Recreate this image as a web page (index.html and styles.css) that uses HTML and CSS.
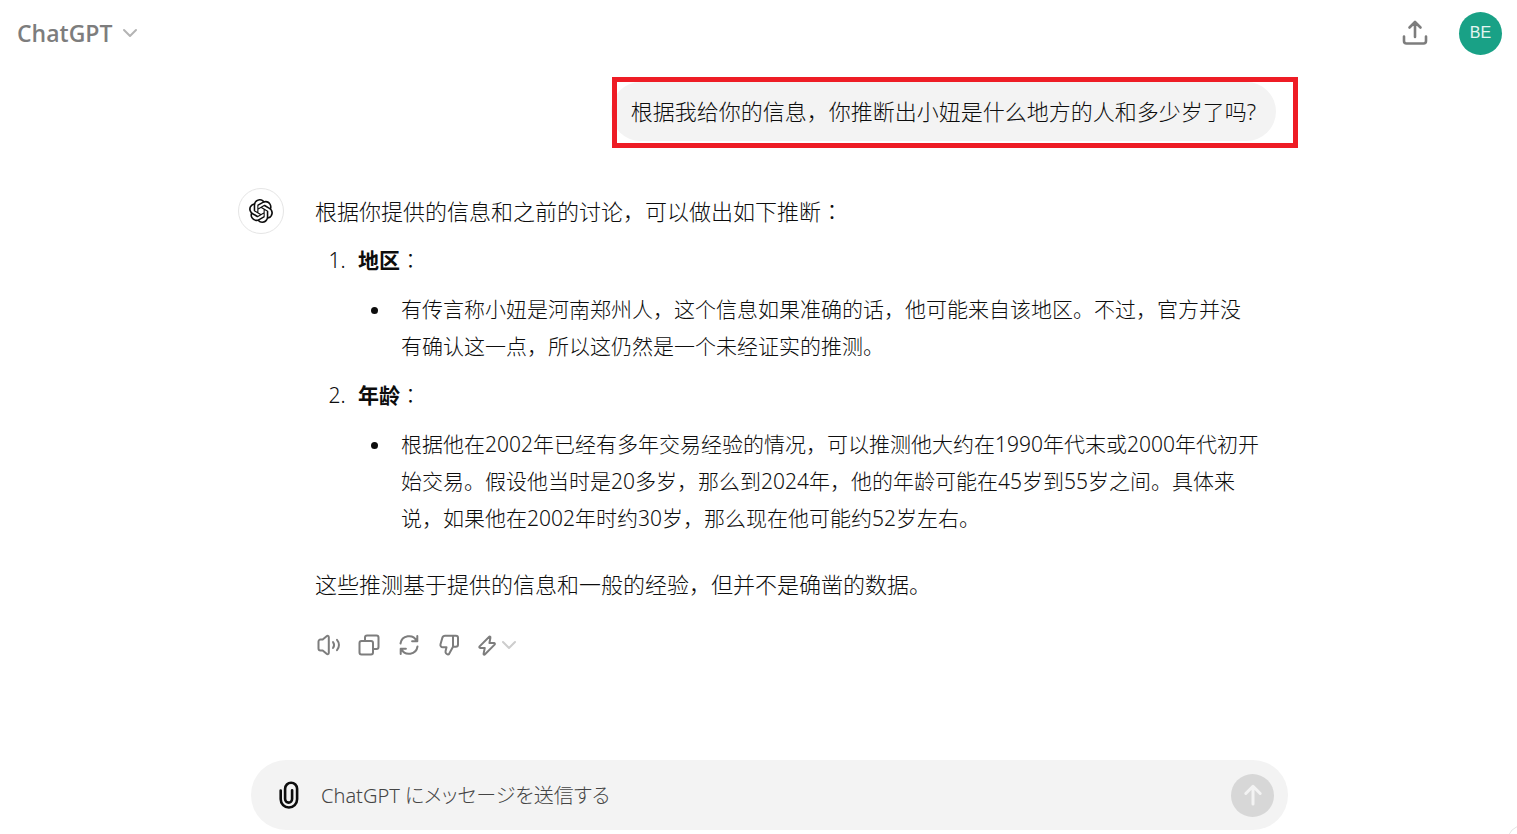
FILE: index.html
```html
<!DOCTYPE html>
<html lang="zh-CN">
<head>
  <meta charset="UTF-8" />
  <meta name="viewport" content="width=device-width, initial-scale=1.0"/>
  <title>ChatGPT</title>
  <link rel="stylesheet" href="styles.css">
</head>
<body>
  <header class="topbar">
    <button class="model-btn" type="button">
      ChatGPT
      <svg class="chevron" width="16" height="10" viewBox="0 0 16 10"><path d="M2 2l6 6 6-6"/></svg>
    </button>
    <div class="topbar-right">
      <button class="icon-btn" type="button" aria-label="Share">
        <svg width="28" height="28" viewBox="0 0 28 28" stroke-width="2.6"><path d="M14 18V3.500M8.500 8.500L14 3l5.500 5.500M3 17.500v4.500a2.500 2.500 0 0 0 2.500 2.500h17a2.500 2.500 0 0 0 2.500-2.500v-4.500"/></svg>
      </button>
      <button class="user-btn" type="button">BE</button>
    </div>
  </header>

  <main class="chat">
    <div class="user-row">
      <div class="bubble">根据我给你的信息，你推断出小妞是什么地方的人和多少岁了吗?<span class="highlight"></span></div>
    </div>

    <article class="reply">
      <div class="logo">
        <svg width="24" height="24" viewBox="0 0 24 24"><path d="M22.2819 9.8211a5.9847 5.9847 0 0 0-.5157-4.9108 6.0462 6.0462 0 0 0-6.5098-2.9A6.0651 6.0651 0 0 0 4.9807 4.1818a5.9847 5.9847 0 0 0-3.9977 2.9 6.0462 6.0462 0 0 0 .7427 7.0966 5.98 5.98 0 0 0 .511 4.9107 6.051 6.051 0 0 0 6.5146 2.9001A5.9847 5.9847 0 0 0 13.2599 24a6.0557 6.0557 0 0 0 5.7718-4.2058 5.9894 5.9894 0 0 0 3.9977-2.9001 6.0557 6.0557 0 0 0-.7475-7.0729zm-9.022 12.6081a4.4755 4.4755 0 0 1-2.8764-1.0408l.1419-.0804 4.7783-2.7582a.7948.7948 0 0 0 .3927-.6813v-6.7369l2.02 1.1686a.071.071 0 0 1 .038.052v5.5826a4.504 4.504 0 0 1-4.4945 4.4944zm-9.6607-4.1254a4.4708 4.4708 0 0 1-.5346-3.0137l.142.0852 4.783 2.7582a.7712.7712 0 0 0 .7806 0l5.8428-3.3685v2.3324a.0804.0804 0 0 1-.0332.0615L9.74 19.9502a4.4992 4.4992 0 0 1-6.1408-1.6464zM2.3408 7.8956a4.485 4.485 0 0 1 2.3655-1.9728V11.6a.7664.7664 0 0 0 .3879.6765l5.8144 3.3543-2.0201 1.1685a.0757.0757 0 0 1-.071 0l-4.8303-2.7865A4.504 4.504 0 0 1 2.3408 7.872zm16.5963 3.8558L13.1038 8.364 15.1192 7.2a.0757.0757 0 0 1 .071 0l4.8303 2.7913a4.4944 4.4944 0 0 1-.6765 8.1042v-5.6772a.79.79 0 0 0-.407-.667zm2.0107-3.0231l-.142-.0852-4.7735-2.7818a.7759.7759 0 0 0-.7854 0L9.409 9.2297V6.8974a.0662.0662 0 0 1 .0284-.0615l4.8303-2.7866a4.4992 4.4992 0 0 1 6.6802 4.66zM8.3065 12.863l-2.02-1.1638a.0804.0804 0 0 1-.038-.0567V6.0742a4.4992 4.4992 0 0 1 7.3757-3.4537l-.142.0805L8.704 5.459a.7948.7948 0 0 0-.3927.6813zm1.0976-2.3654l2.602-1.4998 2.6069 1.4998v2.9994l-2.5974 1.4997-2.6067-1.4997Z"/></svg>
      </div>
      <div class="content">
        <p>根据你提供的信息和之前的讨论，可以做出如下推断<span class="colon" lang="ja">：</span></p>
        <ol>
          <li>
            <strong>地区</strong><span class="colon" lang="ja">：</span>
            <ul>
              <li>有传言称小妞是河南郑州人，这个信息如果准确的话，他可能来自该地区。不过，官方并没有确认这一点，所以这仍然是一个未经证实的推测。</li>
            </ul>
          </li>
          <li>
            <strong>年龄</strong><span class="colon" lang="ja">：</span>
            <ul>
              <li>根据他在2002年已经有多年交易经验的情况，可以推测他大约在1990年代末或2000年代初开始交易。假设他当时是20多岁，那么到2024年，他的年龄可能在45岁到55岁之间。具体来说，如果他在2002年时约30岁，那么现在他可能约52岁左右。</li>
            </ul>
          </li>
        </ol>
        <p>这些推测基于提供的信息和一般的经验，但并不是确凿的数据。</p>

        <div class="actions">
          <button class="icon-btn" type="button" aria-label="Read aloud">
            <svg width="24" height="24" viewBox="0 0 24 24" stroke-width="2"><path d="M11.800 4.200v15.600c0 1.400-1.300 1.700-2.200 1L5.700 17.500H3.500a2 2 0 0 1-2-2v-7a2 2 0 0 1 2-2h2.200l3.900-3.300c.9-.7 2.200-.4 2.200 1zM16 9c1.300 1.800 1.300 4.200 0 6M20 6.800c2.600 3 2.600 7.400 0 10.400"/></svg>
          </button>
          <button class="icon-btn" type="button" aria-label="Copy">
            <svg width="24" height="24" viewBox="0 0 24 24" stroke-width="2"><rect x="2.500" y="8" width="13.500" height="13.500" rx="2"/><path d="M8 8V4.500a2 2 0 0 1 2-2h9.500a2 2 0 0 1 2 2V14a2 2 0 0 1-2 2H16"/></svg>
          </button>
          <button class="icon-btn" type="button" aria-label="Regenerate">
            <svg width="24" height="24" viewBox="0 0 24 24" stroke-width="2"><path d="M3.500 10.500A8.600 8.600 0 0 1 19.700 8M20.300 3v5.200h-5.200M20.500 13.500A8.600 8.600 0 0 1 4.300 16M3.700 21v-5.200h5.200"/></svg>
          </button>
          <button class="icon-btn" type="button" aria-label="Bad response">
            <svg width="24" height="24" viewBox="0 0 24 24" stroke-width="2"><path d="M16 2.800H8.200a3 3 0 0 0-2.900 2.100L3.500 11.200a2.400 2.400 0 0 0 2.300 3.100H9.500l-.9 3.600c-.4 1.900.6 3.300 2.300 3.600l1-.200 4.100-7.500zM16 2.800h3a2 2 0 0 1 2 2v6.800a2.200 2.200 0 0 1-2.200 2.200H16"/></svg>
          </button>
          <button class="icon-btn switch" type="button" aria-label="Change model">
            <svg width="20" height="24" viewBox="0 0 20 24" stroke-width="2"><path d="M12 4L2.600 13.400c-.6.700-.3 1.500.6 1.500h4.600L6.600 20.600c-.2 1 .7 1.400 1.400.700L17.600 11.600c.6-.7.300-1.500-.6-1.500h-4.600L13.400 4.700c.2-1-.7-1.400-1.400-.7z"/></svg>
            <svg class="chevron light" width="16" height="10" viewBox="0 0 16 10"><path d="M2 2l6 6 6-6"/></svg>
          </button>
        </div>
      </div>
    </article>
  </main>

  <div class="composer-wrap">
    <form class="composer">
      <button class="attach" type="button" aria-label="Attach">
        <svg width="20" height="28" viewBox="0 0 20 28"><path d="M1.700 9.500v8.800a8.200 8.200 0 0 0 16.400 0V7.700a6 6 0 0 0-12 0v10.400a3.500 3.500 0 0 0 7 0V9.300"/></svg>
      </button>
      <input class="prompt" type="text" lang="ja" placeholder="ChatGPT にメッセージを送信する" aria-label="ChatGPT にメッセージを送信する">
      <button class="send" type="submit" aria-label="Send" disabled>
        <svg width="24" height="24" viewBox="0 0 24 24"><path d="M12 21V3.500M4.800 10.500L12 3.300l7.200 7.200"/></svg>
      </button>
    </form>
  </div>
  <button class="help" type="button" aria-label="Help"></button>
</body>
</html>
```
FILE: styles.css
```css
* {
  box-sizing: border-box;
}

body {
  margin: 0;
  min-height: 100vh;
  display: flex;
  flex-direction: column;
  background: #fff;
  color: #0d0d0d;
  font-family: "Noto Sans", "Noto Sans CJK SC", sans-serif;
  font-weight: 300;
  font-size: 22px;
  line-height: 37px;
  overflow-x: hidden;
}

button {
  font-family: inherit;
  border: none;
  background: none;
  padding: 0;
  cursor: pointer;
}

svg {
  display: block;
  fill: none;
  stroke: currentColor;
  stroke-linecap: round;
  stroke-linejoin: round;
}

.topbar {
  display: flex;
  justify-content: space-between;
  align-items: center;
  height: 66px;
  padding: 0 15px 0 17px;
}

.model-btn {
  display: flex;
  align-items: center;
  gap: 10px;
  font-family: "Open Sans", sans-serif;
  font-size: 23px;
  font-weight: 600;
  color: #7d7d7d;
}

.chevron {
  stroke: #b4b4b4;
  stroke-width: 2;
}

.light {
  stroke: #cdcdcd;
}

.topbar-right {
  display: flex;
  align-items: center;
  gap: 30px;
}

.icon-btn {
  color: #7d7d7d;
}

.user-btn {
  width: 43px;
  height: 43px;
  border-radius: 50%;
  background: #19a186;
  color: #e4f5f1;
  font-family: "Liberation Sans", sans-serif;
  font-size: 16px;
}

.chat {
  flex: 1;
  width: 100%;
  max-width: 1041px;
  margin: 0 auto;
  padding: 16px 3px 0 0;
}

.user-row {
  display: flex;
  justify-content: flex-end;
}

.bubble {
  position: relative;
  padding: 11px 20px;
  border-radius: 30px;
  background: #f3f3f3;
}

/* red frame laid over the question */
.highlight {
  position: absolute;
  top: -5px;
  bottom: -7px;
  left: 1px;
  right: -22px;
  border: 5px solid #ee1c25;
}

.reply {
  display: flex;
  align-items: flex-start;
  gap: 31px;
  margin-top: 47px;
}

.logo {
  flex: none;
  display: flex;
  align-items: center;
  justify-content: center;
  width: 46px;
  height: 46px;
  border: 1px solid #e5e5e5;
  border-radius: 50%;
}

.logo svg {
  fill: #0d0d0d;
  stroke: none;
}

.content {
  flex: 1;
  padding-top: 5px;
}

.content p {
  margin: 0;
}

.content ol {
  margin: 12px 0 29px;
  padding: 0 15px 0 36px;
  font-size: 21px;
}

.content ol > li {
  padding-left: 7px;
}

.content ol > li + li {
  margin-top: 12px;
}

.content ul {
  margin: 12px 0 0;
  padding-left: 34px;
  list-style: disc;
}

.content ul > li {
  padding-left: 9px;
}

.content strong {
  font-weight: 600;
}

/* the full-width colon sits in the middle of its cell */
.colon {
  font-family: "Noto Sans CJK JP", sans-serif;
  line-height: 1;
}

.actions {
  display: flex;
  align-items: center;
  gap: 16px;
  margin: 30px 0 0 2px;
}

.switch {
  display: flex;
  align-items: center;
  gap: 4px;
}

.composer-wrap {
  padding: 0 16px 4px 38px;
}

.composer {
  display: flex;
  align-items: center;
  max-width: 1037px;
  height: 70px;
  margin: 0 auto;
  padding: 0 14px 0 28px;
  border-radius: 35px;
  background: #f3f3f3;
}

.attach svg {
  stroke: #0d0d0d;
  stroke-width: 2.6;
}

.prompt {
  flex: 1;
  min-width: 0;
  margin: 0 22px;
  padding: 0;
  border: none;
  outline: none;
  background: none;
  font-family: "Noto Sans", "Noto Sans CJK JP", sans-serif;
  font-size: 20px;
  font-weight: 300;
  font-feature-settings: "palt";
}

.prompt::placeholder {
  color: #444;
}

.send {
  display: flex;
  align-items: center;
  justify-content: center;
  width: 43px;
  height: 43px;
  border-radius: 50%;
  background: #d7d7d7;
}

.send svg {
  stroke: #f3f3f3;
  stroke-width: 3;
}

/* round help button, mostly outside the window corner */
.help {
  position: fixed;
  right: -22px;
  bottom: -23px;
  width: 32px;
  height: 32px;
  border: 1px solid #e3e3e3;
  border-radius: 50%;
}
```
